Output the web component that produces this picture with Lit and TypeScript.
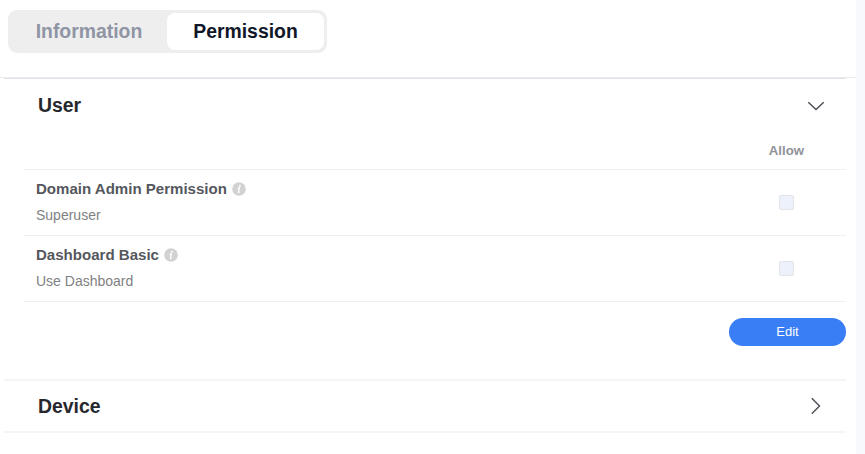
import { LitElement, html, css, svg } from "lit";
import { customElement, property } from "lit/decorators.js";

@customElement("perm-chevron")
class PermChevron extends LitElement {
  @property({ type: Boolean }) open = false;
  static styles = css`
    :host { display: block; width: 20px; height: 20px; }
    svg { display: block; }
    path { fill: none; stroke: #4a4d55; stroke-width: 1.4; }
  `;
  render() {
    return html`<svg width="20" height="20" viewBox="0 0 20 20">
      ${this.open
        ? svg`<path d="M2.3 7.2 10 14.6 17.7 7.2" />`
        : svg`<path d="M5.8 2.3 13.5 10 5.8 17.7" />`}
    </svg>`;
  }
}

@customElement("perm-row")
class PermRow extends LitElement {
  @property() name = "";
  @property() detail = "";
  static styles = css`
    :host {
      display: flex; align-items: center; justify-content: space-between;
      height: 66px; box-sizing: border-box; border-bottom: 1px solid #eeeef5;
      padding: 0 52px 0 12px;
    }
    .text { padding-bottom: 2px; }
    .title { display: flex; align-items: center; gap: 5px; height: 20px; font-size: 15.05px; font-weight: 700; color: #55575d; }
    .detail { height: 20px; line-height: 20px; margin-top: 6px; font-size: 14px; color: #808184; }
    .info { display: block; }
    .box { width: 15px; height: 15px; box-sizing: border-box; border: 1px solid #e2e4e8; border-radius: 2px; background: #ecf1fc; }
  `;
  render() {
    return html`
      <div class="text">
        <div class="title">
          <span>${this.name}</span>
          <svg class="info" width="14" height="14" viewBox="0 0 14 14">
            <circle cx="7" cy="7" r="6.8" fill="#d2d2d2" />
            <circle cx="7.9" cy="3.8" r="1" fill="#fff" />
            <path d="M5.7 6h1.6L6.5 10.4h1.1" fill="none" stroke="#fff" stroke-width="1.3" />
          </svg>
        </div>
        <div class="detail">${this.detail}</div>
      </div>
      <div class="box"></div>
    `;
  }
}

@customElement("app-root")
class AppRoot extends LitElement {
  static styles = css`
    :host {
      display: flex; height: 454px; overflow: hidden; background: #f8f9fc;
      font-family: "Liberation Sans", Arial, sans-serif;
    }
    .panel { width: 856px; background: #fff; }
    .head { height: 78px; box-sizing: border-box; padding: 10px 0 0 8px; border-bottom: 1px solid #ebebef; }
    .tabs {
      display: flex; width: 319px; height: 43px; box-sizing: border-box; padding: 3px;
      border-radius: 9px; background: #eee; font-size: 19.4px; font-weight: 700;
    }
    .tab { display: flex; align-items: center; justify-content: center; width: 156px; border-radius: 8px; color: #8f95a5; }
    .active { width: 157px; background: #fff; color: #101729; }
    .body { margin: 0 10px 0 4px; border-top: 1px solid #e2e2e9; }
    .section { display: flex; align-items: center; justify-content: space-between; height: 52px; padding: 0 20px 0 34px; font-size: 19.4px; font-weight: 700; color: #26282d; }
    .list { margin-left: 20px; }
    .columns { display: flex; justify-content: flex-end; align-items: center; height: 38px; padding-right: 42px; border-bottom: 1px solid #eeeef5; font-size: 13.2px; font-weight: 700; color: #8f9299; }
    .actions { display: flex; justify-content: flex-end; height: 77px; padding-top: 16px; box-sizing: border-box; }
    .edit { width: 117px; height: 28px; border: 0; padding: 0 0 1px; border-radius: 14px; background: #397ef5; color: #fff; font: 13px "Liberation Sans", Arial, sans-serif; }
    .device { height: 50px; border-top: 2px solid #f4f4f9; border-bottom: 2px solid #f4f4f9; }
  `;
  render() {
    return html`
      <main class="panel">
        <header class="head">
          <nav class="tabs">
            <div class="tab">Information</div>
            <div class="tab active">Permission</div>
          </nav>
        </header>
        <div class="body">
          <div class="section"><span>User</span><perm-chevron open></perm-chevron></div>
          <div class="list">
            <div class="columns"><span>Allow</span></div>
            <perm-row name="Domain Admin Permission" detail="Superuser"></perm-row>
            <perm-row name="Dashboard Basic" detail="Use Dashboard"></perm-row>
            <div class="actions"><button class="edit">Edit</button></div>
          </div>
          <div class="section device"><span>Device</span><perm-chevron></perm-chevron></div>
        </div>
      </main>
    `;
  }
}
